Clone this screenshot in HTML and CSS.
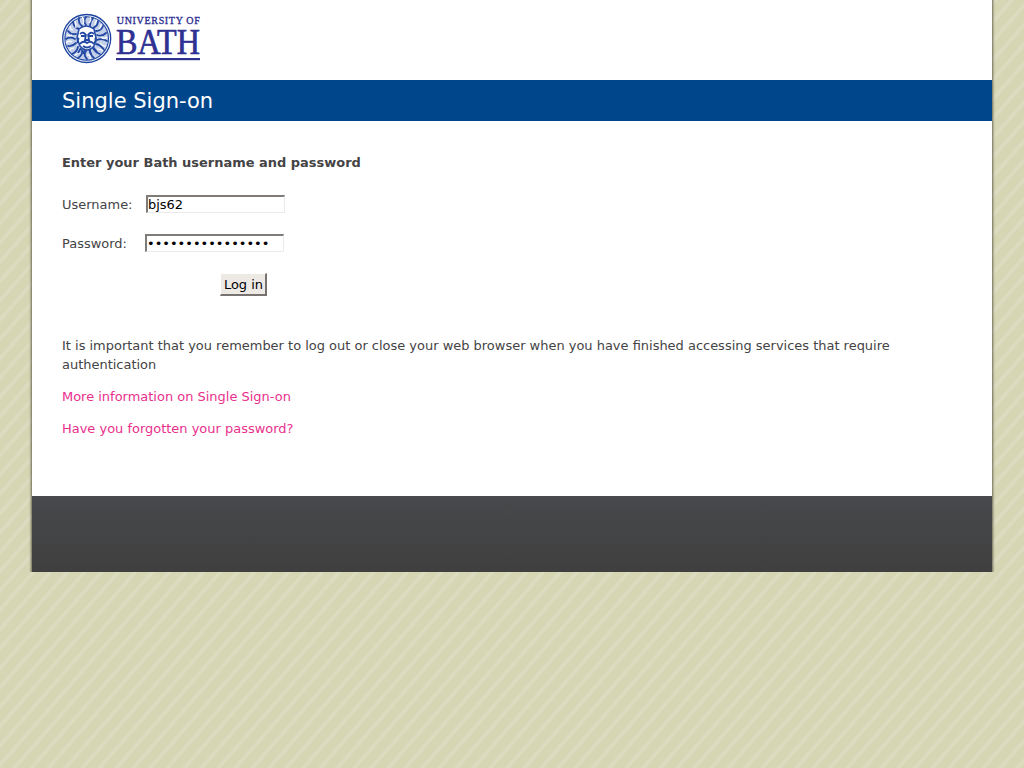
FILE: index.html
```html
<!DOCTYPE html>
<html lang="en">
<head>
<meta charset="utf-8">
<title>Single Sign-on - University of Bath</title>
<link rel="stylesheet" href="styles.css">
</head>
<body>
<div class="page">
  <header class="header">
    <svg class="logo" width="140" height="52" viewBox="0 0 140 52" role="img" aria-label="University of Bath">
      <g fill="none" stroke="#2348a3">
        <circle cx="24.7" cy="25.5" r="24" fill="#eef2fa" stroke="#1d459f" stroke-width="1.3"/>
        <circle cx="24.7" cy="25.5" r="21.8" fill="#c3cfe8" stroke-width="1.1"/>
        <g stroke-width="1.8" stroke-linecap="round">
          <path d="M17 16q-5-1-6-7M20 13q-4-3-3-8M24 12q-3-4 0-8M28 13q0-5 3-8M31 15q5-2 5-7M34 18q5 0 7-5M35 22q5 2 9-2M35 27q5-2 10 1M34 31q5 1 8 6M31 35q3 5 7 6M28 37q0 5 4 8M24 38q-3 4 1 8M20 37q1 5-4 8M16 34q-1 5-6 7M14 30q-4 4-8 3M13 26q-5-3-9 0M14 21q-5 1-8-3"/>
        </g>
        <g stroke="#fff" stroke-width="1.2">
          <path d="M14 15q0-4-1-7M21 11q2-4-1-7M27 10q3-3 1-6M33 12q0-3 2-5M37 16q3-3 2-5M39 24q3 3 6 0M38 30q3 4 6 3M35 36q5 0 6 2M25 42q4-1 3 4M18 40q-5 1-5 3M12 35q-4 0-4 3M10 29q-3-2-6 1M10 22q-3 2-5-1M11 17q-3 0-3-4"/>
        </g>
        <path d="M17 16q7-6 15 0l2 9-2 8q-7 8-14 0l-3-8z" fill="#fff" stroke-width="1.5"/>
        <path d="M18 21q3-3 6 1M26 22q3-4 6-1M24 21l-1 6h4l-1-6M18 31q3-4 7-1 4-3 7 1M21 33q4 3 8 0M19 35l-3 5M23 36l-2 5M27 36l2 5M31 34l4 5M17 25q-2 2-1 5M33 25q2 2 0 5" stroke-width="1.8"/>
        <path d="M19 23h4M27 23h4" stroke-width="2.2"/>
      </g>
      <g class="logo-text">
        <text class="logo-small" x="54.8" y="11.4" textLength="83">UNIVERSITY OF</text>
        <text class="logo-large" x="54" y="40.6" textLength="84" lengthAdjust="spacingAndGlyphs">BATH</text>
        <rect x="54" y="45" width="84" height="2.2"/>
      </g>
    </svg>
  </header>
  <h1 class="title">Single Sign-on</h1>
  <main class="content">
    <h2 class="heading">Enter your Bath username and password</h2>
    <form class="login">
      <div class="field"><label class="label-user" for="username">Username:</label><input class="input" id="username" type="text" value="bjs62"></div>
      <div class="field"><label class="label-pass" for="password">Password:</label><input class="input" id="password" type="password" value="abcdefghijklmnop"></div>
      <button class="submit" type="button">Log in</button>
    </form>
    <p class="text">It is important that you remember to log out or close your web browser when you have finished accessing services that require authentication</p>
    <p class="text"><a class="link" href="#">More information on Single Sign-on</a></p>
    <p class="text"><a class="link" href="#">Have you forgotten your password?</a></p>
  </main>
  <footer class="footer"></footer>
</div>
</body>
</html>
```
FILE: styles.css
```css
* { box-sizing: border-box; }
body {
  margin: 0;
  min-height: 100vh;
  font: 12.98px/19px "DejaVu Sans", sans-serif;
  color: #444345;
  background: repeating-linear-gradient(131.3deg, #d6d6b5 0 4.3px, #dbdbc0 5.5px 8.1px, #d6d6b5 9.3px 12.77px);
}
.page {
  width: 960px;
  height: 572px;
  margin: 0 auto;
  display: flex;
  flex-direction: column;
  background: #fff;
  position: relative;
}
.page::before, .page::after {
  content: "";
  position: absolute;
  top: 0;
  bottom: 0;
  width: 3px;
}
.page::before { left: -3px; background: linear-gradient(to left, rgba(70,70,55,.65), rgba(80,80,60,.22) 55%, transparent); }
.page::after { right: -3px; background: linear-gradient(to right, rgba(70,70,55,.65), rgba(80,80,60,.22) 55%, transparent); }
.header { height: 80px; padding: 13px 30px 0; }
.logo { display: block; overflow: visible; }
.logo-text { fill: #2e3192; font-family: "Liberation Serif", serif; }
.logo-small { font-size: 10px; stroke: #2e3192; stroke-width: .35px; }
.logo-large { font-size: 36.5px; stroke: #2e3192; stroke-width: .7px; }
.title {
  margin: 0;
  height: 41px;
  padding: 1px 0 0 30px;
  background: #00468b;
  color: #fff;
  font-size: 21px;
  font-weight: normal;
  line-height: 41px;
}
.content { height: 375px; padding: 32px 30px 0; }
.heading { margin: 0 0 23px; font-size: 12.98px; line-height: 19px; }
.login { height: 141px; margin: 0; }
.field { display: flex; height: 18px; margin-bottom: 21px; }
.label-user { width: 84px; line-height: 19px; }
.label-pass { width: 83px; line-height: 19px; }
.input {
  width: 139px;
  height: 18px;
  padding: 0;
  border: 2px solid;
  border-width: 2px 1px 1px 2px;
  border-color: #7f7b78 #edebe7 #edebe7 #7f7b78;
  background: #fff;
  font: 12.98px/15px "DejaVu Sans", sans-serif;
  color: #000;
  outline: 0;
}
.submit {
  display: block;
  width: 47px;
  height: 23px;
  margin-left: 158px;
  padding: 0 0 0 1px;
  border: 1px solid;
  border-width: 1px 2px 2px 1px;
  border-color: #fff #777371 #777371 #fff;
  background: #edeae6;
  color: #000;
  font: 12.98px/19px "DejaVu Sans", sans-serif;
}
.text { margin: 0 0 13px; }
.link { color: #e8308c; text-decoration: none; }
.footer { height: 76px; background: linear-gradient(#48494c, #3f3f3f); }
```
